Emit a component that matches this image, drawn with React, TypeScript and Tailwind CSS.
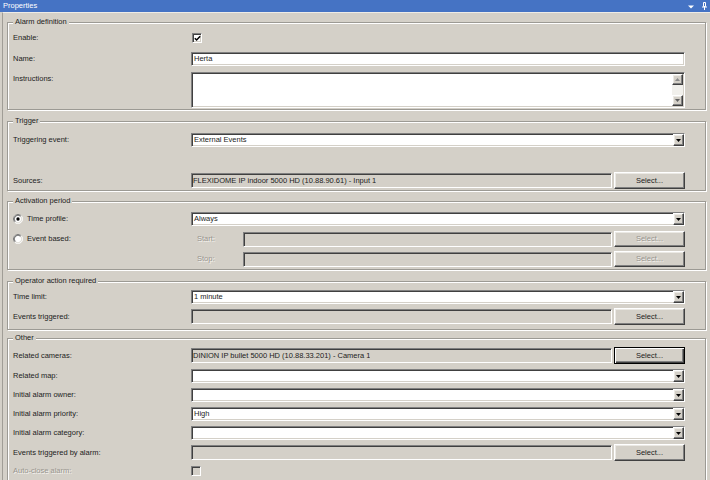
import React from "react";

const sunken =
  "border border-t-[#808080] border-l-[#808080] border-b-white border-r-white shadow-[inset_1px_1px_0_#404040,inset_-1px_-1px_0_#d4d0c8]";
const raised =
  "border border-t-white border-l-white border-b-[#404040] border-r-[#404040] shadow-[inset_-1px_-1px_0_#808080,inset_1px_1px_0_#ebe9e4]";
const focusedBtn =
  "border border-black shadow-[inset_1px_1px_0_#fff,inset_-1px_-1px_0_#404040,inset_-2px_-2px_0_#808080]";
const disabledText = "text-[#98958e] [text-shadow:1px_1px_0_#f4f3ef]";

function Down({ color = "#000" }: { color?: string }) {
  return (
    <svg width="5" height="3" viewBox="0 0 5 3">
      <path d="M0 0H5L2.5 3Z" fill={color} />
    </svg>
  );
}
function Up({ color = "#000" }: { color?: string }) {
  return (
    <svg width="5" height="3" viewBox="0 0 5 3">
      <path d="M0 3H5L2.5 0Z" fill={color} />
    </svg>
  );
}

function Label({ children, className = "" }: { children?: React.ReactNode; className?: string }) {
  return <div className={`w-[178px] shrink-0 whitespace-nowrap ${className}`}>{children}</div>;
}

function Select({ value = "" }: { value?: string }) {
  return (
    <div className={`flex-1 h-[14px] bg-white flex items-stretch ${sunken}`}>
      <span className="flex-1 pl-[2px] leading-[12px] whitespace-nowrap overflow-hidden">{value}</span>
      <div className={`w-[11px] bg-[#d4d0c8] flex items-center justify-center ${raised}`}>
        <Down />
      </div>
    </div>
  );
}

function Field({ value = "", className = "h-[15px]" }: { value?: string; className?: string }) {
  return (
    <div className={`flex-1 bg-[#d4d0c8] flex items-center ${sunken} ${className}`}>
      <span className="pl-[1px] whitespace-nowrap overflow-hidden">{value}</span>
    </div>
  );
}

function Button({
  disabled = false,
  focused = false,
  className = "h-[17px]",
}: {
  disabled?: boolean;
  focused?: boolean;
  className?: string;
}) {
  return (
    <div
      className={`w-[71px] ml-[2px] shrink-0 bg-[#d4d0c8] flex items-center justify-center ${
        focused ? focusedBtn : raised
      } ${disabled ? disabledText : ""} ${className}`}
    >
      Select...
    </div>
  );
}

function Checkbox({ checked = false, disabled = false }: { checked?: boolean; disabled?: boolean }) {
  return (
    <div
      className={`w-[10px] h-[10px] flex items-center justify-center ${sunken} ${
        disabled ? "bg-[#d4d0c8]" : "bg-white"
      }`}
    >
      {checked && (
        <svg width="7" height="7" viewBox="0 0 7 7">
          <path d="M0.8 3.2L2.6 5L6.2 1.2" stroke="#000" strokeWidth="1.5" fill="none" />
        </svg>
      )}
    </div>
  );
}

function Radio({ checked = false }: { checked?: boolean }) {
  return (
    <svg width="10" height="10" viewBox="0 0 12 12" className="shrink-0">
      <circle cx="6" cy="6" r="5.5" fill="#fff" />
      <path d="M2.1 9.9A5.5 5.5 0 0 1 9.9 2.1" stroke="#808080" fill="none" />
      <path d="M9.9 2.1A5.5 5.5 0 0 1 2.1 9.9" stroke="#fff" fill="none" />
      <path d="M2.8 9.2A4.5 4.5 0 0 1 9.2 2.8" stroke="#404040" fill="none" />
      <path d="M9.2 2.8A4.5 4.5 0 0 1 2.8 9.2" stroke="#d4d0c8" fill="none" />
      {checked && <circle cx="6" cy="6" r="2" fill="#000" />}
    </svg>
  );
}

function Group({
  legend,
  className,
  children,
}: {
  legend: string;
  className: string;
  children: React.ReactNode;
}) {
  return (
    <fieldset
      className={`border border-[#9c9a94] shadow-[inset_1px_1px_0_#fff,1px_1px_0_#fff] ${className}`}
    >
      <legend className="ml-[5px] px-[2px] leading-[10px] bg-[#d4d0c8]">{legend}</legend>
      <div className="pl-[5px] pr-[20px] flex flex-col">{children}</div>
    </fieldset>
  );
}

export default function App() {
  return (
    <div className="w-[710px] h-[480px] overflow-hidden bg-[#d4d0c8] text-[#1c1c1c] text-[7.5px] leading-[10px] font-['Liberation_Sans',Arial,sans-serif] flex flex-col">
      <div className="h-[12px] shrink-0 bg-[#4573c4] flex items-center pl-[3px] pr-[3px] text-white">
        <span className="flex-1">Properties</span>
        <svg width="6" height="4" viewBox="0 0 6 4" className="mr-[8px] mt-[1px]">
          <path d="M0 0.5H6L3 3.5Z" fill="#fff" />
        </svg>
        <svg width="5" height="8" viewBox="0 0 5 8">
          <path d="M1.5 0.5H3.5V4.5H1.5Z" stroke="#fff" fill="none" />
          <path d="M0 5H5" stroke="#fff" />
          <path d="M2.5 5V8" stroke="#fff" />
        </svg>
      </div>
      <div className="flex-1 ml-[2px] border-l border-t border-l-[#a09d96] border-t-[#eeece7] pl-[4px] pr-[4px] pt-[4px] flex flex-col">
        <Group legend="Alarm definition" className="pb-[1px]">
          <div className="flex items-center mt-[6px] h-[10px]">
            <Label>Enable:</Label>
            <div className="ml-[1px]">
              <Checkbox checked />
            </div>
          </div>
          <div className="flex items-center mt-[9px] h-[14px]">
            <Label>Name:</Label>
            <div className={`flex-1 h-[14px] bg-white flex items-center ${sunken}`}>
              <span className="pl-[2px]">Herta</span>
            </div>
          </div>
          <div className="flex items-start mt-[6px] h-[36px]">
            <Label className="pt-[2px]">Instructions:</Label>
            <div className={`flex-1 h-[36px] bg-white flex justify-end ${sunken}`}>
              <div className="w-[11px] mr-[1px] my-[1px] flex flex-col bg-[#f1f0ec]">
                <div className={`h-[11px] bg-[#d4d0c8] flex items-center justify-center ${raised}`}>
                  <Up color="#8a8a8a" />
                </div>
                <div className="flex-1" />
                <div className={`h-[11px] bg-[#d4d0c8] flex items-center justify-center ${raised}`}>
                  <Down color="#606060" />
                </div>
              </div>
            </div>
          </div>
        </Group>

        <Group legend="Trigger" className="mt-[6px] pb-[1px]">
          <div className="flex items-center mt-[7px] h-[14px]">
            <Label>Triggering event:</Label>
            <Select value="External Events" />
          </div>
          <div className="flex items-center mt-[25px] h-[17px]">
            <Label>Sources:</Label>
            <Field value="FLEXIDOME IP indoor 5000 HD (10.88.90.61) - Input 1" />
            <Button />
          </div>
        </Group>

        <Group legend="Activation period" className="mt-[5px] pb-[2px]">
          <div className="flex items-center mt-[6px] h-[14px]">
            <Label className="flex items-center gap-[4px]">
              <Radio checked />
              <span>Time profile:</span>
            </Label>
            <Select value="Always" />
          </div>
          <div className="flex items-center mt-[5px] h-[16px]">
            <Label className="flex items-center gap-[4px]">
              <Radio />
              <span>Event based:</span>
            </Label>
            <div className={`w-[52px] shrink-0 pl-[6px] ${disabledText}`}>Start:</div>
            <Field />
            <Button disabled className="h-[16px]" />
          </div>
          <div className="flex items-center mt-[4px] h-[16px]">
            <Label />
            <div className={`w-[52px] shrink-0 pl-[6px] ${disabledText}`}>Stop:</div>
            <Field />
            <Button disabled className="h-[16px]" />
          </div>
        </Group>

        <Group legend="Operator action required" className="mt-[6px] pb-[4px]">
          <div className="flex items-center mt-[4px] h-[14px]">
            <Label>Time limit:</Label>
            <Select value="1 minute" />
          </div>
          <div className="flex items-center mt-[4px] h-[17px]">
            <Label>Events triggered:</Label>
            <Field />
            <Button />
          </div>
        </Group>

        <Group legend="Other" className="mt-[3px] pb-[10px]">
          <div className="flex items-center mt-[4px] h-[17px]">
            <Label>Related cameras:</Label>
            <Field value="DINION IP bullet 5000 HD (10.88.33.201) - Camera 1" />
            <Button focused />
          </div>
          <div className="flex items-center mt-[5px] h-[14px]">
            <Label>Related map:</Label>
            <Select />
          </div>
          <div className="flex items-center mt-[5px] h-[14px]">
            <Label>Initial alarm owner:</Label>
            <Select />
          </div>
          <div className="flex items-center mt-[5px] h-[14px]">
            <Label>Initial alarm priority:</Label>
            <Select value="High" />
          </div>
          <div className="flex items-center mt-[5px] h-[14px]">
            <Label>Initial alarm category:</Label>
            <Select />
          </div>
          <div className="flex items-center mt-[4px] h-[17px]">
            <Label>Events triggered by alarm:</Label>
            <Field />
            <Button />
          </div>
          <div className="flex items-center mt-[5px] h-[10px]">
            <Label className={disabledText}>Auto-close alarm:</Label>
            <Checkbox disabled />
          </div>
        </Group>
      </div>
    </div>
  );
}
